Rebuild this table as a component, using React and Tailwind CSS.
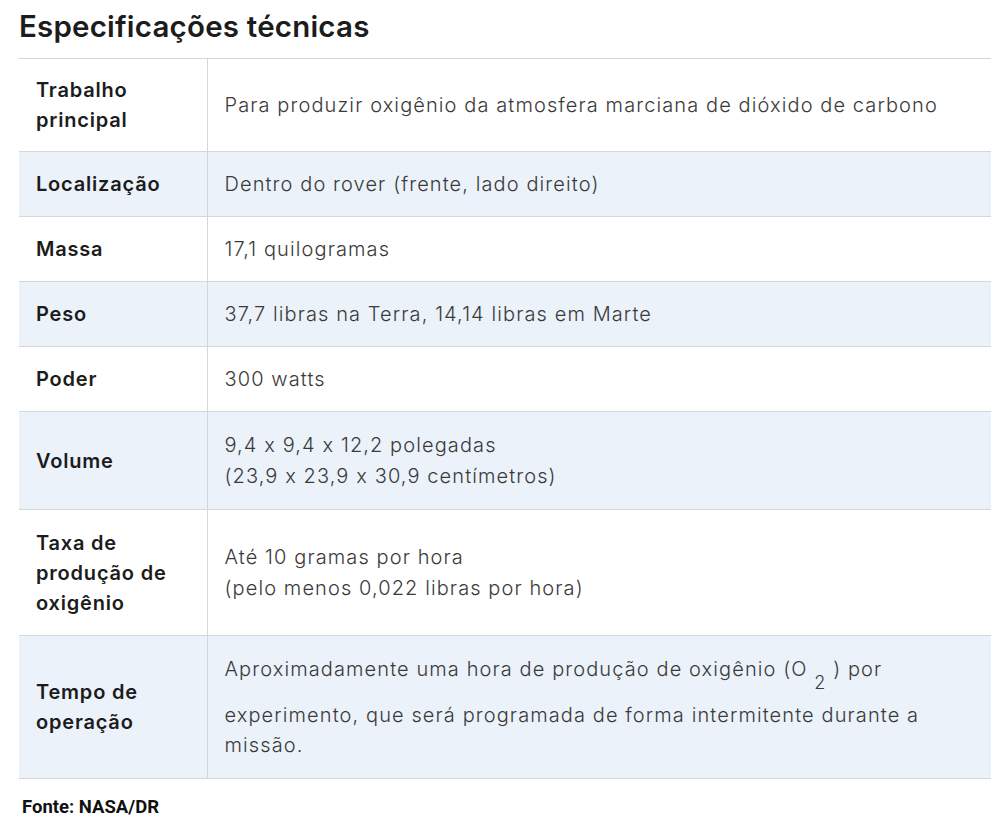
import React from "react";

const rows = [
  { label: ["Trabalho", "principal"], body: ["Para produzir oxigênio da atmosfera marciana de dióxido de carbono"], h: "h-[93px]", alt: false },
  { label: ["Localização"], body: ["Dentro do rover (frente, lado direito)"], h: "h-[65px]", alt: true },
  { label: ["Massa"], body: ["17,1 quilogramas"], h: "h-[65px]", alt: false },
  { label: ["Peso"], body: ["37,7 libras na Terra, 14,14 libras em Marte"], h: "h-[65px]", alt: true },
  { label: ["Poder"], body: ["300 watts"], h: "h-[65px]", alt: false },
  { label: ["Volume"], body: ["9,4 x 9,4 x 12,2 polegadas", "(23,9 x 23,9 x 30,9 centímetros)"], h: "h-[98px]", alt: true },
  { label: ["Taxa de", "produção de", "oxigênio"], body: ["Até 10 gramas por hora", "(pelo menos 0,022 libras por hora)"], h: "h-[126px]", alt: false },
];

const labelCls =
  "w-[188px] pl-[17px] pr-1 align-middle border-r border-[#d6d6d6] text-[20px] leading-[30px] font-semibold tracking-[0.8px] text-[#1c1c1c] whitespace-nowrap";
const bodyCls =
  "pl-[17px] pr-2 align-middle text-[20px] leading-[31px] font-light tracking-[1.1px] text-[#3a3a3a] whitespace-nowrap";

export default function App() {
  return (
    <div
      className="w-[1006px] h-[840px] bg-white [font-feature-settings:'calt'_0]"
      style={{ fontFamily: "Inter, 'Open Sans', sans-serif" }}
    >
      <h1 className="pl-[19px] pt-[8px] h-[58px] text-[29.5px] leading-[36px] font-semibold text-[#1c1c1c] tracking-[0.2px]">
        Especificações técnicas
      </h1>
      <table className="ml-[19px] w-[972px] border-collapse">
        <tbody>
          {rows.map((r, i) => (
            <tr key={i} className={`${r.h} ${r.alt ? "bg-[#ebf2fa]" : "bg-white"} border-t border-b border-[#d6d6d6]`}>
              <td className={labelCls}>
                {r.label.map((l, j) => (
                  <div key={j}>{l}</div>
                ))}
              </td>
              <td className={bodyCls}>
                {r.body.map((l, j) => (
                  <div key={j}>{l}</div>
                ))}
              </td>
            </tr>
          ))}
          <tr className="h-[143px] bg-[#ebf2fa] border-t border-b border-[#d6d6d6]">
            <td className={labelCls}>
              <div>Tempo de</div>
              <div>operação</div>
            </td>
            <td className={bodyCls}>
              <div className="leading-[30px] mb-[16px]">
                Aproximadamente uma hora de produção de oxigênio (O{" "}
                <sub className="text-[18px] relative top-[13px] align-baseline">2</sub> ) por
              </div>
              <div className="leading-[30px]">experimento, que será programada de forma intermitente durante a</div>
              <div className="leading-[30px]">missão.</div>
            </td>
          </tr>
        </tbody>
      </table>
      <div
        className="pl-[22px] pt-[15px] text-[18.5px] font-bold text-[#111]"
        style={{ fontFamily: "Roboto, sans-serif" }}
      >
        Fonte: NASA/DR
      </div>
    </div>
  );
}
